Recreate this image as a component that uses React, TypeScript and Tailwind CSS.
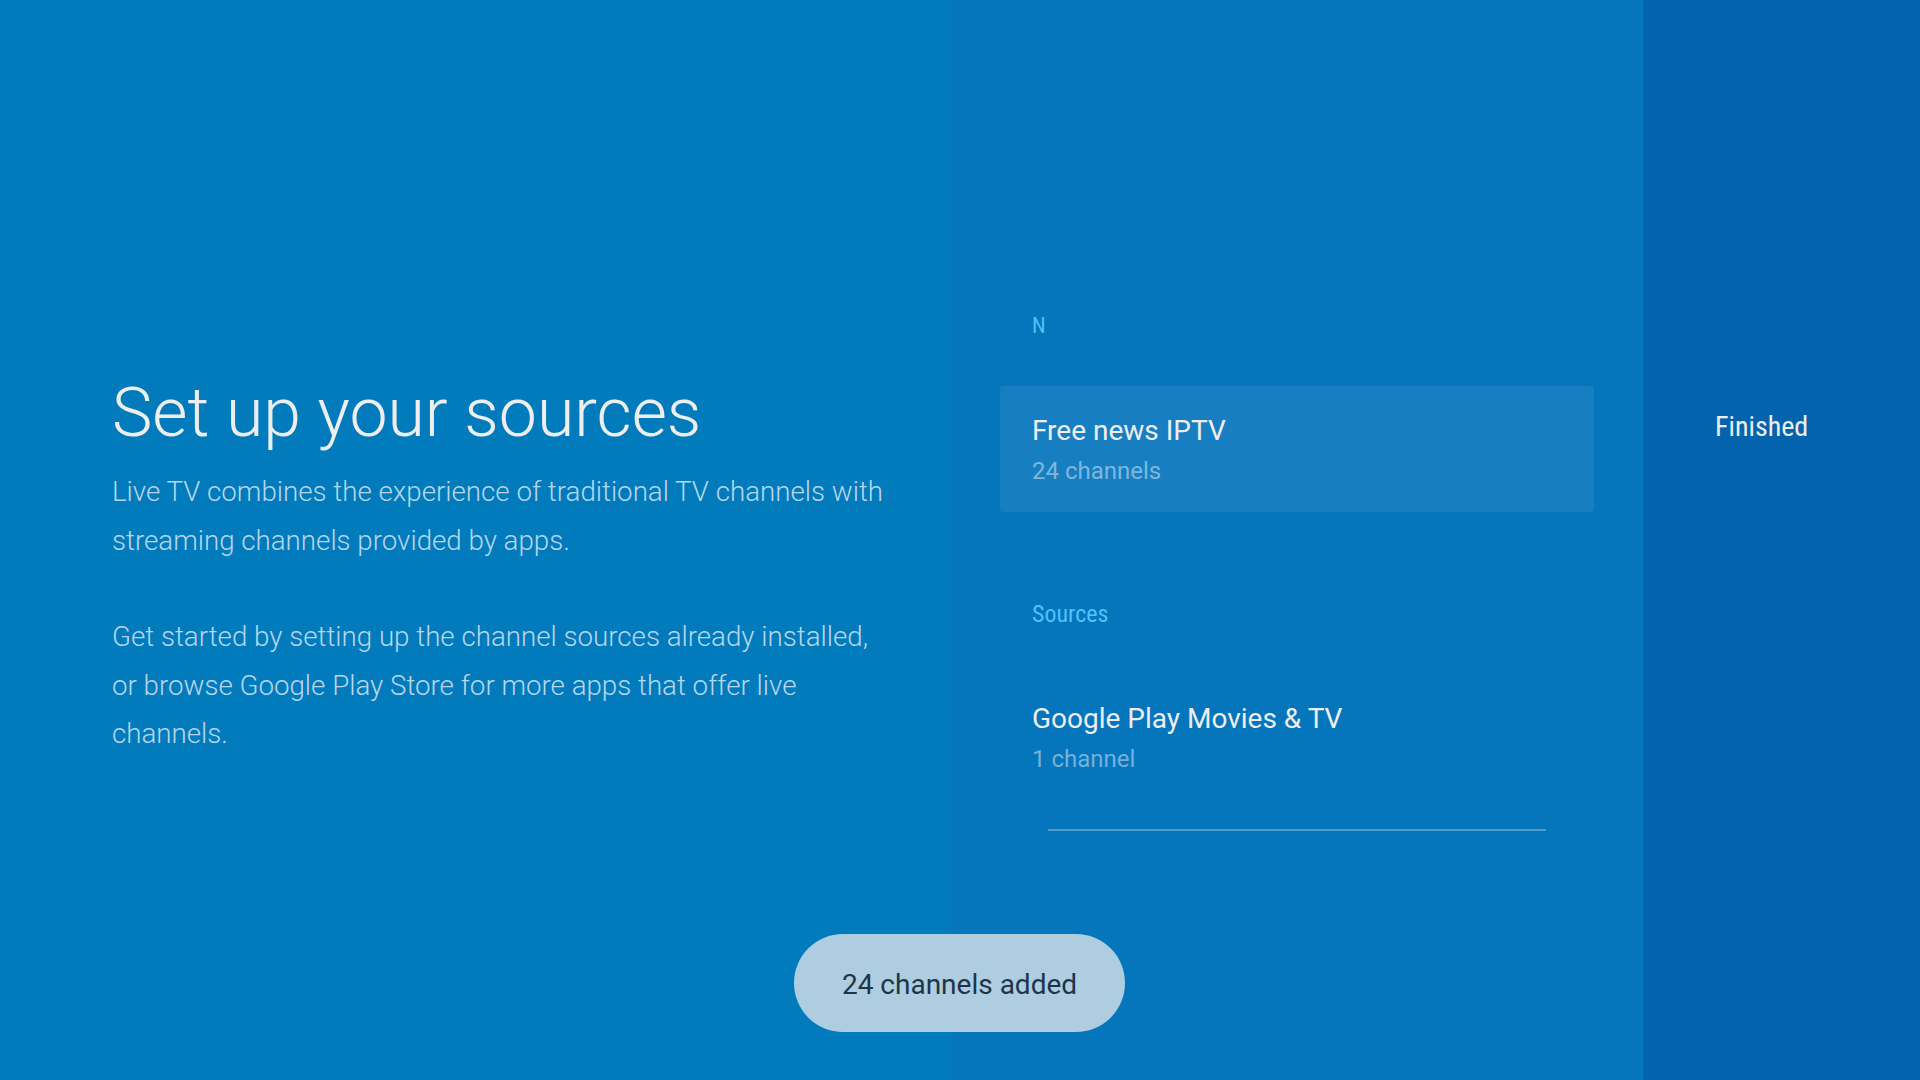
import React from "react";

const roboto = { fontFamily: "Roboto, 'Open Sans', sans-serif" };

function SourceRow({
  title,
  subtitle,
  focused,
}: {
  title: string;
  subtitle: string;
  focused?: boolean;
}) {
  return (
    <div
      className={`h-[126px] rounded-[4px] pl-8 pt-[27px] ${
        focused ? "bg-[#187ec2]" : ""
      }`}
    >
      <div className="text-[28px] leading-[36px] text-[#eeeeee]">{title}</div>
      <div className="mt-[7px] text-[24px] leading-[30px] text-white/45">
        {subtitle}
      </div>
    </div>
  );
}

export default function App() {
  return (
    <div
      className="relative flex h-[1080px] w-[1920px] overflow-hidden"
      style={roboto}
    >
      {/* left: guidance */}
      <div className="w-[952px] shrink-0 bg-[#027bbd] pl-[112px] pt-[374px]">
        <h1 className="text-[68px] font-light leading-[79px] text-[#eeeeee]">
          Set up your sources
        </h1>
        <p className="mt-[14px] text-[27.7px] font-light leading-[49px] text-[#b7d6ea]">
          Live TV combines the experience of traditional TV channels with
          <br />
          streaming channels provided by apps.
        </p>
        <p className="mt-[48px] text-[27.7px] font-light leading-[48.5px] text-[#b7d6ea]">
          Get started by setting up the channel sources already installed,
          <br />
          or browse Google Play Store for more apps that offer live
          <br />
          channels.
        </p>
      </div>

      {/* middle: list of sources */}
      <div className="w-[691px] shrink-0 bg-[#0575bc] pl-[48px] pr-[49px] pt-[313px]">
        <div className="pl-8 text-[22px] leading-[26px] text-[#4fc3f7] [font-stretch:75%]">
          N
        </div>
        <div className="mt-[47px]">
          <SourceRow title="Free news IPTV" subtitle="24 channels" focused />
        </div>
        <div className="mt-[88px] pl-8 text-[24px] leading-[28px] text-[#4fc3f7] [font-stretch:75%]">
          Sources
        </div>
        <div className="mt-[46px]">
          <SourceRow title="Google Play Movies & TV" subtitle="1 channel" />
        </div>
        <div className="mx-auto mt-[29px] h-[2px] w-[498px] bg-white/30" />
      </div>

      {/* right: actions */}
      <div className="flex-1 bg-[#0364ad] pl-[72px] pt-[409px]">
        <div className="text-[28px] leading-[36px] text-[#eeeeee] [font-stretch:75%]">
          Finished
        </div>
      </div>

      {/* toast */}
      <div className="absolute bottom-[48px] left-[794px] flex h-[98px] w-[331px] items-center justify-center rounded-full bg-[#aecde1] pt-[4px]">
        <span className="text-[28px] text-[#1d3549]">24 channels added</span>
      </div>
    </div>
  );
}
